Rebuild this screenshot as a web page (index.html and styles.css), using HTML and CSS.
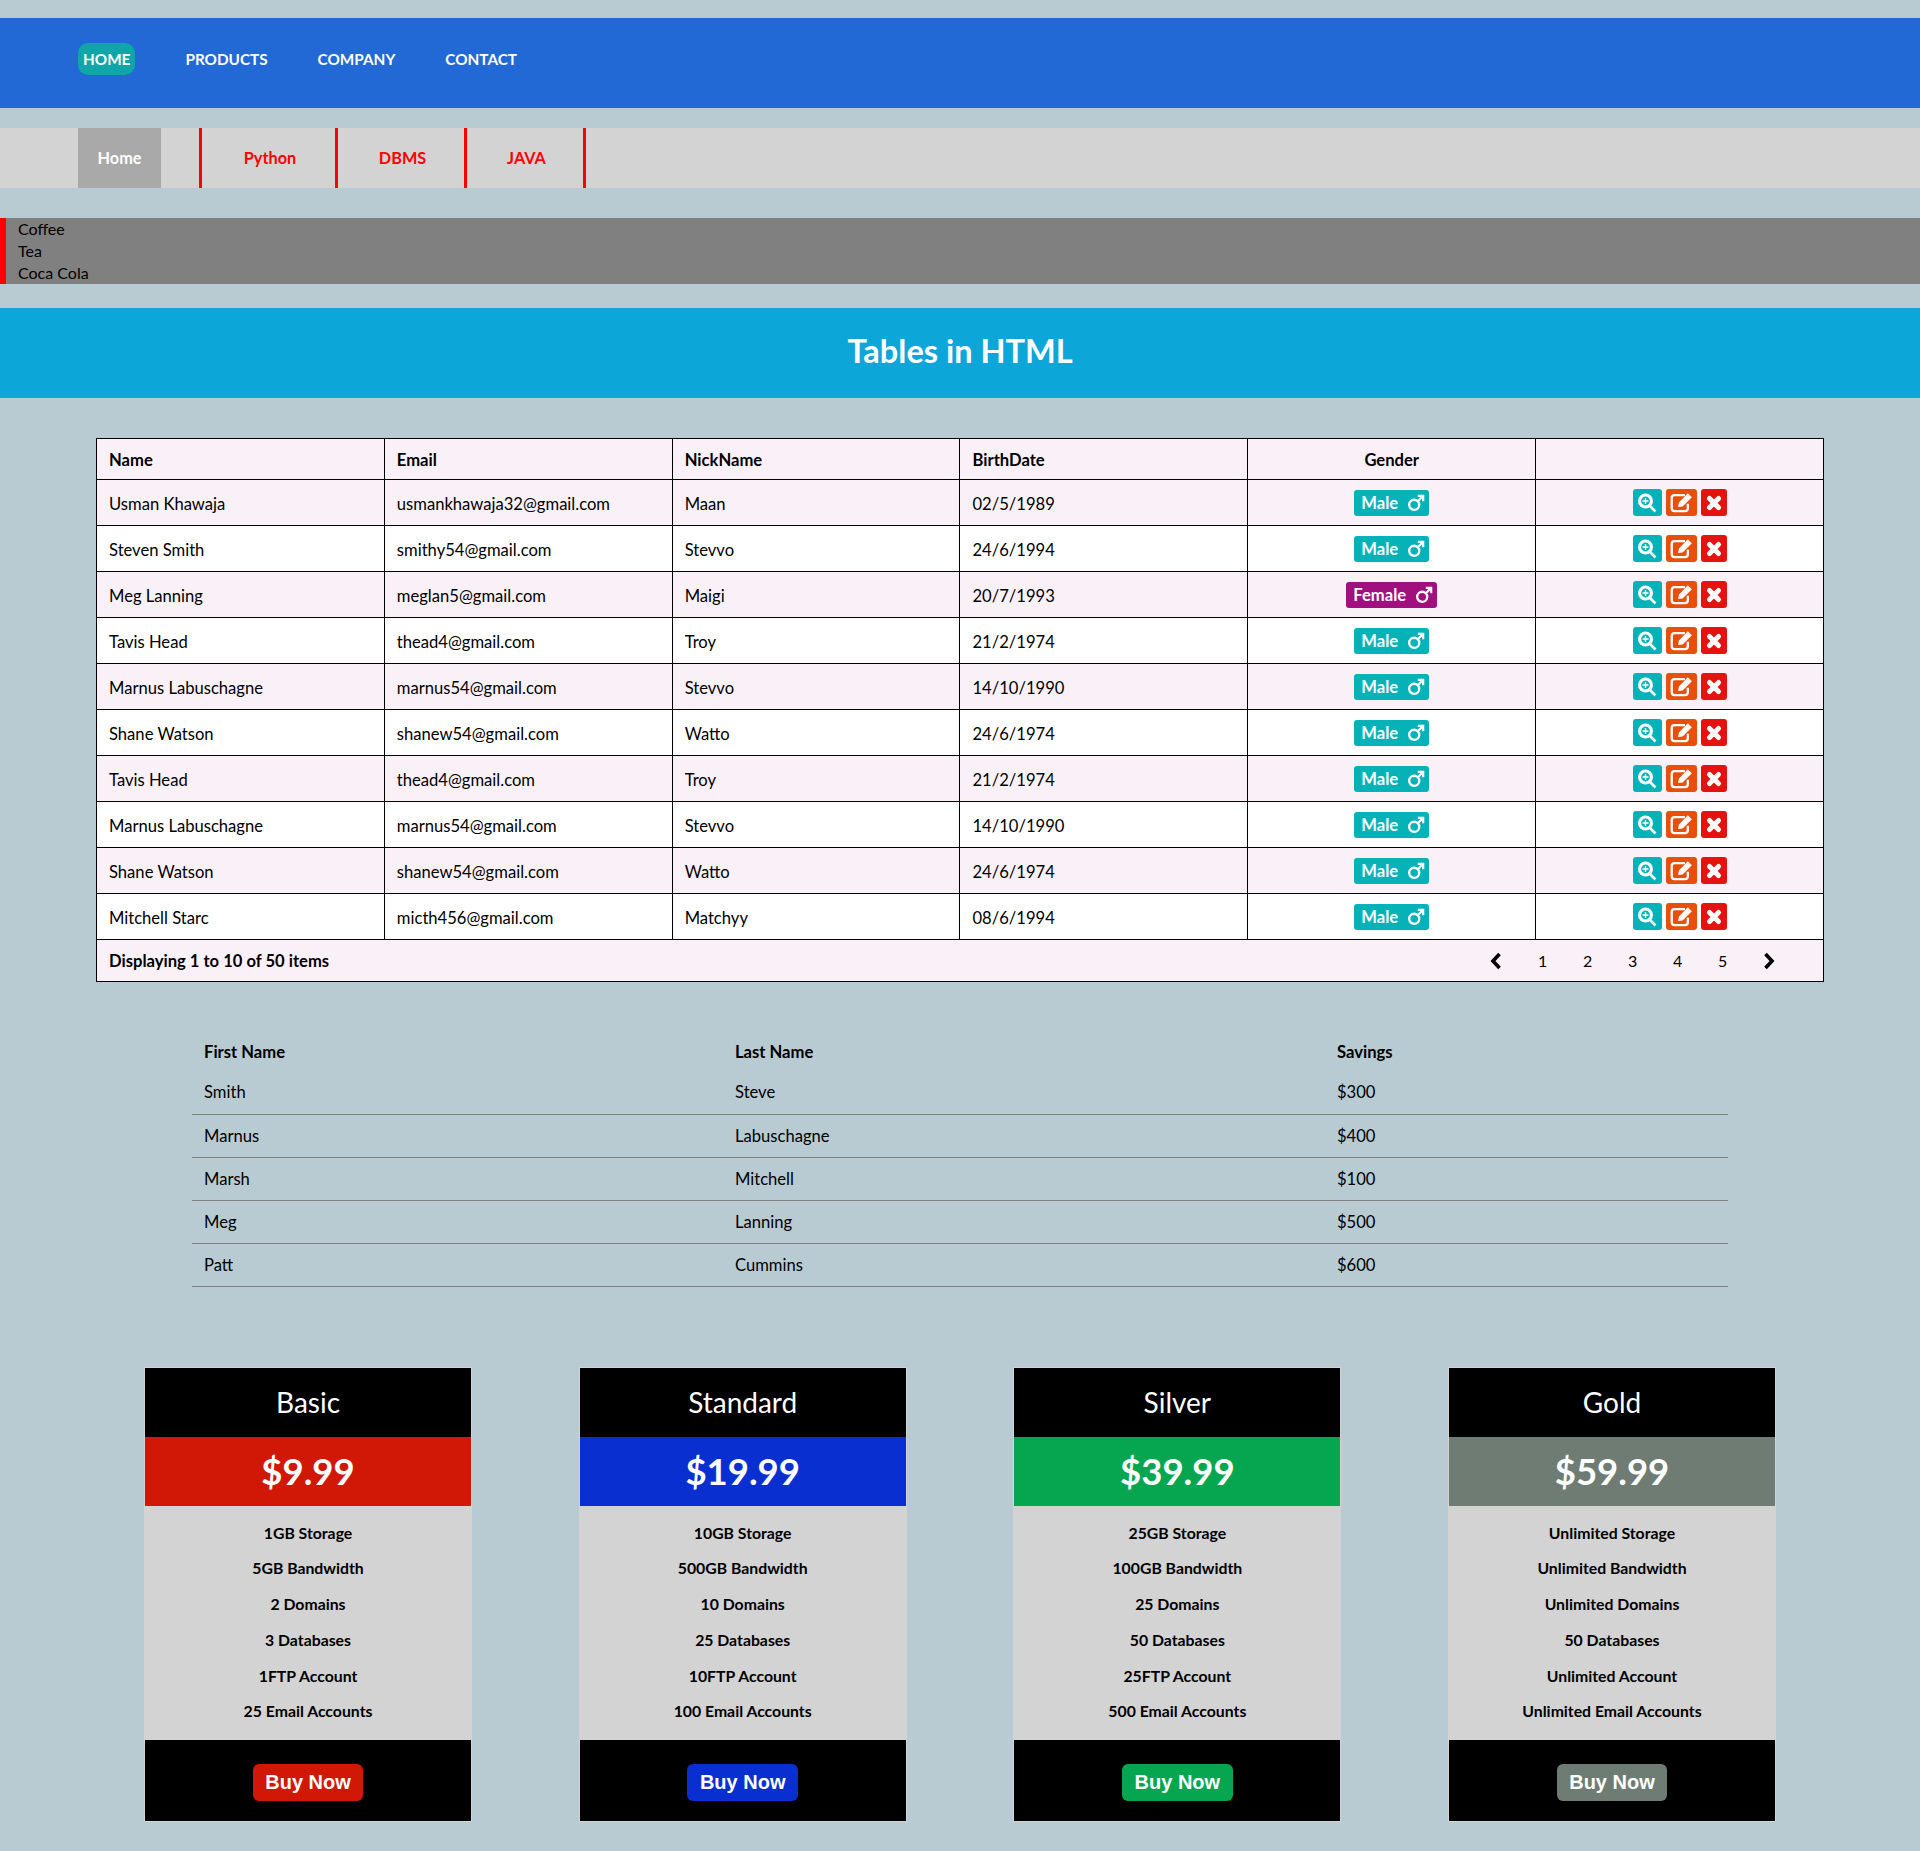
FILE: index.html
```html
<!DOCTYPE html>
<html lang="en">

<head>
  <meta charset="UTF-8">
  <title>Tables in HTML</title>
  <link rel="stylesheet" href="styles.css">
</head>

<body>
  <svg class="defs" width="0" height="0">
    <symbol id="i-male" viewBox="0 0 20 20">
      <circle cx="8" cy="12" r="5.6" fill="none" stroke="currentColor" stroke-width="2.6" />
      <path d="M12 8 L17.5 2.5 M12 2 H18 V8" fill="none" stroke="currentColor" stroke-width="2.4" />
    </symbol>
    <symbol id="i-zoom" viewBox="0 0 20 20">
      <circle cx="8.5" cy="8" r="7.5" fill="currentColor" />
      <circle cx="8.5" cy="8" r="4.4" fill="#05b2b8" />
      <path d="M8.5 5 V11 M5.5 8 H11.5" stroke="currentColor" stroke-width="1.4" />
      <path d="M13 13 L18.5 18.5" stroke="currentColor" stroke-width="2.6" />
    </symbol>
    <symbol id="i-edit" viewBox="0 0 20 20">
      <path d="M13 3.5 H4 Q1.5 3.5 1.5 6 V15 Q1.5 17.5 4 17.5 H13 Q15.5 17.5 15.5 15 V11" fill="none" stroke="currentColor" stroke-width="2" />
      <path d="M7 14 L7.8 10 L15.5 2 L19 5.5 L11 13.5 Z" fill="currentColor" />
    </symbol>
    <symbol id="i-remove" viewBox="0 0 20 20">
      <path d="M5.5 5.5 L14.5 14.5 M14.5 5.5 L5.5 14.5" stroke="currentColor" stroke-width="5" stroke-linecap="round" />
    </symbol>
    <symbol id="i-prev" viewBox="0 0 12 18">
      <path d="M9.5 2 L3 9 L9.5 16" fill="none" stroke="currentColor" stroke-width="3.6" />
    </symbol>
    <symbol id="i-next" viewBox="0 0 12 18">
      <path d="M2.5 2 L9 9 L2.5 16" fill="none" stroke="currentColor" stroke-width="3.6" />
    </symbol>
  </svg>

  <ul class="topnav">
    <li class="active"><a href="#">HOME</a></li>
    <li><a href="#">PRODUCTS</a></li>
    <li><a href="#">COMPANY</a></li>
    <li><a href="#">CONTACT</a></li>
  </ul>

  <ul class="subnav">
    <li class="subnav-home"><a href="#">Home</a></li>
    <li class="subnav-tab tab-python"><a href="#">Python</a></li>
    <li class="subnav-tab tab-dbms"><a href="#">DBMS</a></li>
    <li class="subnav-tab tab-java"><a href="#">JAVA</a></li>
  </ul>

  <ul class="drinks">
    <li>Coffee</li>
    <li>Tea</li>
    <li>Coca Cola</li>
  </ul>

  <h1 class="title">Tables in HTML</h1>

  <table class="people">
    <thead>
      <tr>
        <th>Name</th>
        <th>Email</th>
        <th>NickName</th>
        <th>BirthDate</th>
        <th class="center">Gender</th>
        <th></th>
      </tr>
    </thead>
    <tbody>
      <tr>
        <td>Usman Khawaja</td>
        <td>usmankhawaja32@gmail.com</td>
        <td>Maan</td>
        <td>02/5/1989</td>
        <td class="center"><span class="badge male">Male <svg><use href="#i-male" /></svg></span></td>
        <td class="actions"><div><a class="act act-view" href="#"><svg><use href="#i-zoom" /></svg></a><a class="act act-edit" href="#"><svg><use href="#i-edit" /></svg></a><a class="act act-del" href="#"><svg><use href="#i-remove" /></svg></a></div></td>
      </tr>
      <tr>
        <td>Steven Smith</td>
        <td>smithy54@gmail.com</td>
        <td>Stevvo</td>
        <td>24/6/1994</td>
        <td class="center"><span class="badge male">Male <svg><use href="#i-male" /></svg></span></td>
        <td class="actions"><div><a class="act act-view" href="#"><svg><use href="#i-zoom" /></svg></a><a class="act act-edit" href="#"><svg><use href="#i-edit" /></svg></a><a class="act act-del" href="#"><svg><use href="#i-remove" /></svg></a></div></td>
      </tr>
      <tr>
        <td>Meg Lanning</td>
        <td>meglan5@gmail.com</td>
        <td>Maigi</td>
        <td>20/7/1993</td>
        <td class="center"><span class="badge female">Female <svg><use href="#i-male" /></svg></span></td>
        <td class="actions"><div><a class="act act-view" href="#"><svg><use href="#i-zoom" /></svg></a><a class="act act-edit" href="#"><svg><use href="#i-edit" /></svg></a><a class="act act-del" href="#"><svg><use href="#i-remove" /></svg></a></div></td>
      </tr>
      <tr>
        <td>Tavis Head</td>
        <td>thead4@gmail.com</td>
        <td>Troy</td>
        <td>21/2/1974</td>
        <td class="center"><span class="badge male">Male <svg><use href="#i-male" /></svg></span></td>
        <td class="actions"><div><a class="act act-view" href="#"><svg><use href="#i-zoom" /></svg></a><a class="act act-edit" href="#"><svg><use href="#i-edit" /></svg></a><a class="act act-del" href="#"><svg><use href="#i-remove" /></svg></a></div></td>
      </tr>
      <tr>
        <td>Marnus Labuschagne</td>
        <td>marnus54@gmail.com</td>
        <td>Stevvo</td>
        <td>14/10/1990</td>
        <td class="center"><span class="badge male">Male <svg><use href="#i-male" /></svg></span></td>
        <td class="actions"><div><a class="act act-view" href="#"><svg><use href="#i-zoom" /></svg></a><a class="act act-edit" href="#"><svg><use href="#i-edit" /></svg></a><a class="act act-del" href="#"><svg><use href="#i-remove" /></svg></a></div></td>
      </tr>
      <tr>
        <td>Shane Watson</td>
        <td>shanew54@gmail.com</td>
        <td>Watto</td>
        <td>24/6/1974</td>
        <td class="center"><span class="badge male">Male <svg><use href="#i-male" /></svg></span></td>
        <td class="actions"><div><a class="act act-view" href="#"><svg><use href="#i-zoom" /></svg></a><a class="act act-edit" href="#"><svg><use href="#i-edit" /></svg></a><a class="act act-del" href="#"><svg><use href="#i-remove" /></svg></a></div></td>
      </tr>
      <tr>
        <td>Tavis Head</td>
        <td>thead4@gmail.com</td>
        <td>Troy</td>
        <td>21/2/1974</td>
        <td class="center"><span class="badge male">Male <svg><use href="#i-male" /></svg></span></td>
        <td class="actions"><div><a class="act act-view" href="#"><svg><use href="#i-zoom" /></svg></a><a class="act act-edit" href="#"><svg><use href="#i-edit" /></svg></a><a class="act act-del" href="#"><svg><use href="#i-remove" /></svg></a></div></td>
      </tr>
      <tr>
        <td>Marnus Labuschagne</td>
        <td>marnus54@gmail.com</td>
        <td>Stevvo</td>
        <td>14/10/1990</td>
        <td class="center"><span class="badge male">Male <svg><use href="#i-male" /></svg></span></td>
        <td class="actions"><div><a class="act act-view" href="#"><svg><use href="#i-zoom" /></svg></a><a class="act act-edit" href="#"><svg><use href="#i-edit" /></svg></a><a class="act act-del" href="#"><svg><use href="#i-remove" /></svg></a></div></td>
      </tr>
      <tr>
        <td>Shane Watson</td>
        <td>shanew54@gmail.com</td>
        <td>Watto</td>
        <td>24/6/1974</td>
        <td class="center"><span class="badge male">Male <svg><use href="#i-male" /></svg></span></td>
        <td class="actions"><div><a class="act act-view" href="#"><svg><use href="#i-zoom" /></svg></a><a class="act act-edit" href="#"><svg><use href="#i-edit" /></svg></a><a class="act act-del" href="#"><svg><use href="#i-remove" /></svg></a></div></td>
      </tr>
      <tr>
        <td>Mitchell Starc</td>
        <td>micth456@gmail.com</td>
        <td>Matchyy</td>
        <td>08/6/1994</td>
        <td class="center"><span class="badge male">Male <svg><use href="#i-male" /></svg></span></td>
        <td class="actions"><div><a class="act act-view" href="#"><svg><use href="#i-zoom" /></svg></a><a class="act act-edit" href="#"><svg><use href="#i-edit" /></svg></a><a class="act act-del" href="#"><svg><use href="#i-remove" /></svg></a></div></td>
      </tr>
    </tbody>
    <tfoot>
      <tr>
        <td colspan="6">
          <div class="foot">
            <b>Displaying 1 to 10 of 50 items</b>
            <div class="pager">
              <svg class="chev"><use href="#i-prev" /></svg>
              <span>1</span><span>2</span><span>3</span><span>4</span><span>5</span>
              <svg class="chev"><use href="#i-next" /></svg>
            </div>
          </div>
        </td>
      </tr>
    </tfoot>
  </table>

  <table class="savings">
    <thead>
      <tr>
        <th class="col-first">First Name</th>
        <th class="col-last">Last Name</th>
        <th>Savings</th>
      </tr>
    </thead>
    <tbody>
      <tr><td>Smith</td><td>Steve</td><td>$300</td></tr>
      <tr><td>Marnus</td><td>Labuschagne</td><td>$400</td></tr>
      <tr><td>Marsh</td><td>Mitchell</td><td>$100</td></tr>
      <tr><td>Meg</td><td>Lanning</td><td>$500</td></tr>
      <tr><td>Patt</td><td>Cummins</td><td>$600</td></tr>
    </tbody>
  </table>

  <div class="plans">
    <div class="plan plan-red">
      <div class="plan-name">Basic</div>
      <div class="plan-price">$9.99</div>
      <ul class="plan-list">
        <li>1GB Storage</li>
        <li>5GB Bandwidth</li>
        <li>2 Domains</li>
        <li>3 Databases</li>
        <li>1FTP Account</li>
        <li>25 Email Accounts</li>
      </ul>
      <div class="plan-foot"><a class="buy" href="#">Buy Now</a></div>
    </div>
    <div class="plan plan-blue">
      <div class="plan-name">Standard</div>
      <div class="plan-price">$19.99</div>
      <ul class="plan-list">
        <li>10GB Storage</li>
        <li>500GB Bandwidth</li>
        <li>10 Domains</li>
        <li>25 Databases</li>
        <li>10FTP Account</li>
        <li>100 Email Accounts</li>
      </ul>
      <div class="plan-foot"><a class="buy" href="#">Buy Now</a></div>
    </div>
    <div class="plan plan-green">
      <div class="plan-name">Silver</div>
      <div class="plan-price">$39.99</div>
      <ul class="plan-list">
        <li>25GB Storage</li>
        <li>100GB Bandwidth</li>
        <li>25 Domains</li>
        <li>50 Databases</li>
        <li>25FTP Account</li>
        <li>500 Email Accounts</li>
      </ul>
      <div class="plan-foot"><a class="buy" href="#">Buy Now</a></div>
    </div>
    <div class="plan plan-grey">
      <div class="plan-name">Gold</div>
      <div class="plan-price">$59.99</div>
      <ul class="plan-list">
        <li>Unlimited Storage</li>
        <li>Unlimited Bandwidth</li>
        <li>Unlimited Domains</li>
        <li>50 Databases</li>
        <li>Unlimited Account</li>
        <li>Unlimited Email Accounts</li>
      </ul>
      <div class="plan-foot"><a class="buy" href="#">Buy Now</a></div>
    </div>
  </div>
</body>

</html>
```

FILE: styles.css
```css
* {
  margin: 0;
  padding: 0;
  box-sizing: border-box;
}

body {
  background-color: #b8cad2;
  color: #000;
  font-family: Lato, "Open Sans", sans-serif;
  font-size: 16.6px;
  padding: 18px 0 31px;
}

ul {
  list-style: none;
}

a {
  color: inherit;
  text-decoration: none;
}

.defs {
  position: absolute;
}

/* top bar */
.topnav {
  display: flex;
  align-items: flex-start;
  gap: 50px;
  height: 90px;
  padding: 25px 0 0 78px;
  background-color: #2269d6;
  color: #fff;
  font-size: 15.3px;
  font-weight: bold;
}

.topnav li {
  height: 32px;
  line-height: 32px;
  border-radius: 10px;
}

.topnav .active {
  padding: 0 5px;
  background-color: #10a5a8;
}

/* second bar */
.subnav {
  display: flex;
  height: 60px;
  line-height: 60px;
  margin-top: 20px;
  padding-left: 78px;
  background-color: #d3d3d3;
  font-size: 16.3px;
  font-weight: bold;
  text-align: center;
}

.subnav-home {
  width: 83px;
  margin-right: 38px;
  background-color: #a9a9a9;
  color: #fff;
}

.subnav-tab {
  padding-left: 3px;
  color: #f00;
  border-right: 3px solid #f00;
}

.tab-python {
  width: 139px;
  border-left: 3px solid #f00;
}

.tab-dbms {
  width: 129px;
}

.tab-java {
  width: 119px;
}

/* grey list */
.drinks {
  height: 66px;
  margin-top: 30px;
  padding-left: 12px;
  border-left: 6px solid #f00;
  background-color: #808080;
  font-size: 16px;
  line-height: 22px;
}

.title {
  height: 90px;
  margin-top: 24px;
  background-color: #0ca6d8;
  color: #fff;
  font-size: 32.5px;
  line-height: 85px;
  text-align: center;
}

/* first table */
.people {
  width: 1728px;
  margin: 40px auto 0;
  border-collapse: collapse;
  table-layout: fixed;
  background-color: #fff;
}

.people th,
.people td {
  border: 1px solid #000;
  padding: 2px 12px 0;
  height: 46px;
  text-align: left;
}

.people th {
  height: 41px;
}

.people .center {
  text-align: center;
}

.people thead tr,
.people tbody tr:nth-child(odd),
.people tfoot tr {
  background-color: #faf0f8;
}

.people tfoot td {
  height: 42px;
  padding-top: 0;
}

.badge {
  display: inline-flex;
  align-items: center;
  gap: 9px;
  height: 26px;
  margin-top: -2px;
  padding: 0 4px 0 7px;
  border-radius: 3px;
  color: #fff;
  font-weight: bold;
  vertical-align: middle;
}

.badge svg {
  width: 18px;
  height: 18px;
}

.male {
  background-color: #05b2b8;
}

.female {
  background-color: #a0107e;
}

.actions div {
  display: flex;
  justify-content: center;
  gap: 4px;
  margin-top: -2px;
}

.act {
  display: flex;
  align-items: center;
  justify-content: center;
  height: 27px;
  border-radius: 3px;
  color: #fff;
}

.act svg {
  width: 20px;
  height: 20px;
}

.act-edit svg {
  width: 23px;
  height: 23px;
}

.act-view {
  width: 29px;
  background-color: #05b2b8;
}

.act-edit {
  width: 31px;
  background-color: #e84e0c;
}

.act-del {
  width: 26px;
  background-color: #e4130f;
}

.foot {
  display: flex;
  justify-content: space-between;
  align-items: center;
}

.pager {
  display: flex;
  align-items: center;
  gap: 36px;
  padding-right: 36px;
  font-size: 16px;
}

.pager span {
  width: 9px;
  text-align: center;
}

.chev {
  width: 12px;
  height: 18px;
}

/* second table */
.savings {
  width: 1536px;
  margin: 51px auto 0;
  border-collapse: collapse;
  table-layout: fixed;
}

.savings th,
.savings td {
  height: 43px;
  padding: 0 12px;
  text-align: left;
}

.savings th {
  height: 38px;
}

.savings td {
  border-bottom: 1px solid #808080;
}

.col-first {
  width: 531px;
}

.col-last {
  width: 602px;
}

/* price cards */
.plans {
  display: flex;
  justify-content: center;
  gap: 108.67px;
  margin-top: 81px;
}

.plan {
  width: 326px;
  outline: 1px solid #d3d3d3;
  text-align: center;
}

.plan-name {
  height: 69px;
  background-color: #000;
  color: #fff;
  font-size: 28px;
  line-height: 69px;
}

.plan-price {
  height: 69px;
  color: #fff;
  font-size: 36.5px;
  font-weight: bold;
  line-height: 69px;
}

.plan-list {
  height: 234px;
  padding-top: 9px;
  background-color: #d3d3d3;
  font-size: 15.8px;
  font-weight: bold;
  line-height: 35.75px;
}

.plan-foot {
  height: 81px;
  padding-top: 24px;
  background-color: #000;
}

.buy {
  display: inline-block;
  height: 37px;
  padding: 0 12.5px;
  border-radius: 6px;
  color: #fff;
  font-family: "Liberation Sans", Arial, sans-serif;
  font-size: 20px;
  font-weight: bold;
  line-height: 37px;
}

.plan-red .plan-price,
.plan-red .buy {
  background-color: #d11705;
}

.plan-blue .plan-price,
.plan-blue .buy {
  background-color: #0a2fd1;
}

.plan-green .plan-price,
.plan-green .buy {
  background-color: #05a64f;
}

.plan-grey .plan-price,
.plan-grey .buy {
  background-color: #6f7c73;
}
```
